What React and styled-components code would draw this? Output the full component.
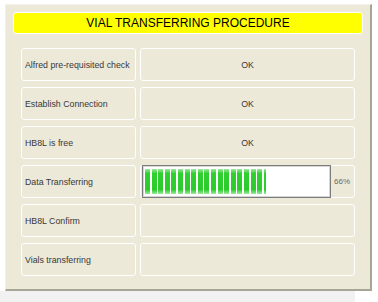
import React from 'react';
import styled, { createGlobalStyle } from 'styled-components';

const GlobalStyle = createGlobalStyle`
    body {
        margin: 0;
        background-color: #ffffff;
        font-family: "Liberation Sans", Arial, sans-serif;
    }
`;

const Page = styled.div`
    width: 378px;
    height: 302px;
    padding-top: 4px;
    box-sizing: border-box;
    overflow: hidden;
`;

const Panel = styled.div`
    margin-left: 5px;
    width: 367px;
    height: 287px;
    box-sizing: border-box;
    background-color: #ece9d8;
    border-top: 1px solid #f4f2e8;
    border-left: 1px solid #f4f2e8;
    border-right: 2px solid #a7a595;
    border-bottom: 2px solid #a7a595;
    padding: 7px 7px 0 7px;
`;

const Strip = styled.div`
    width: 355px;
    height: 11px;
    background-color: #f1f1f1;
`;

const Header = styled.div`
    height: 22px;
    width: 350px;
    box-sizing: border-box;
    background-color: #ffff00;
    border: 1px solid #ffffff;
    border-radius: 3px;
    display: flex;
    align-items: center;
    justify-content: center;
    font-size: 12px;
    color: #000000;
`;

const Rows = styled.div`
    margin: 14px 0 0 8px;
    display: grid;
    grid-template-columns: 115px 215px;
    grid-auto-rows: 33px;
    column-gap: 4px;
    row-gap: 6px;
`;

const Cell = styled.div`
    box-sizing: border-box;
    border: 1px solid #ffffff;
    border-radius: 3px;
    display: flex;
    align-items: center;
    justify-content: ${({ center }) => (center ? 'center' : 'flex-start')};
    padding: ${({ center }) => (center ? '0' : '0 0 0 3px')};
    font-size: 8.8px;
    color: #383838;
    white-space: nowrap;
`;

const ProgressCell = styled(Cell)`
    padding: 0 0 0 1px;
    gap: 3px;
`;

const Bar = styled.div`
    width: 189px;
    height: 33px;
    box-sizing: border-box;
    border: 1px solid #7c7c7c;
    box-shadow: inset 0 0 0 1px #d6d6d6;
    background-color: #ffffff;
    padding: 3px 2px;
`;

const Fill = styled.div`
    height: 100%;
    background-image:
        repeating-linear-gradient(90deg, transparent 0 5px, #ffffff 5px 6.6px),
        linear-gradient(180deg, #9ee89e 0%, #2fd02f 18%, #2acb2a 82%, #9ee89e 100%);
`;

const Percent = styled.span`
    font-size: 8px;
    color: #6a6a6a;
`;

const steps = [
    { label: 'Alfred pre-requisited check', value: 'OK' },
    { label: 'Establish Connection', value: 'OK' },
    { label: 'HB8L is free', value: 'OK' },
    { label: 'Data Transferring', progress: 66 },
    { label: 'HB8L Confirm' },
    { label: 'Vials transferring' },
];

export default function App() {
    return (
        <>
            <GlobalStyle />
            <Page>
                <Panel>
                    <Header>VIAL TRANSFERRING PROCEDURE</Header>
                    <Rows>
                        {steps.map(step => (
                            <React.Fragment key={step.label}>
                                <Cell>{step.label}</Cell>
                                {step.progress !== undefined ? (
                                    <ProgressCell>
                                        <Bar>
                                            <Fill style={{ width: `${step.progress}%` }} />
                                        </Bar>
                                        <Percent>{step.progress}%</Percent>
                                    </ProgressCell>
                                ) : (
                                    <Cell center>{step.value}</Cell>
                                )}
                            </React.Fragment>
                        ))}
                    </Rows>
                </Panel>
                <Strip />
            </Page>
        </>
    );
}
